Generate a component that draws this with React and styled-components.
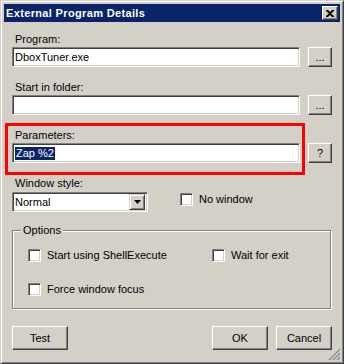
import React from 'react';
import styled, { createGlobalStyle } from 'styled-components';

const Global = createGlobalStyle`
  html, body { margin: 0; padding: 0; background: #d4d0c8; }
  * { box-sizing: border-box; }
`;

const Window = styled.div`
  position: relative;
  width: 344px;
  height: 364px;
  background: #d4d0c8;
  border: 1px solid;
  border-color: #d4d0c8 #404040 #404040 #d4d0c8;
  box-shadow: inset 1px 1px #fff, inset -1px -1px #808080;
  padding: 3px;
  display: flex;
  flex-direction: column;
  font-family: "Liberation Sans", Arial, sans-serif;
  font-size: 11px;
  color: #000;
`;

const TitleBar = styled.div`
  height: 18px;
  background: #0a246a;
  display: flex;
  align-items: center;
  justify-content: space-between;
  padding: 0 2px 0 2px;
`;

const Title = styled.div`
  color: #fff;
  font-weight: bold;
  font-size: 11px;
  letter-spacing: 0.35px;
  line-height: 14px;
`;

const CloseBtn = styled.div`
  width: 16px;
  height: 14px;
  background: #d4d0c8;
  border: 1px solid;
  border-color: #fff #404040 #404040 #fff;
  box-shadow: inset -1px -1px #808080;
  display: flex;
  align-items: center;
  justify-content: center;
`;

const Body = styled.div`
  flex: 1;
  display: flex;
  flex-direction: column;
  padding: 11px 8px 0 8px;
`;

const Label = styled.div`
  height: 13px;
  line-height: 13px;
  padding-left: 3px;
  margin-top: ${p => p.$top || 0}px;
  margin-bottom: ${p => (p.$gap == null ? 1 : p.$gap)}px;
`;

const Row = styled.div`
  display: flex;
  align-items: flex-start;
  gap: ${p => p.$gap || 8}px;
`;

const Field = styled.div`
  width: ${p => p.$w || 288}px;
  height: 20px;
  background: #fff;
  border: 1px solid;
  border-color: #808080 #fff #fff #808080;
  box-shadow: inset 1px 1px #404040, inset -1px -1px #d4d0c8;
  padding: 0 2px;
  line-height: 18px;
  white-space: nowrap;
  display: flex;
  align-items: center;
`;

const Selected = styled.span`
  background: #0a246a;
  color: #fff;
  line-height: 13px;
  padding: 0 1px;
`;

const Button = styled.div`
  width: ${p => p.$w || 24}px;
  height: ${p => p.$h || 20}px;
  background: #d4d0c8;
  border: 1px solid;
  border-color: #fff #404040 #404040 #fff;
  box-shadow: inset -1px -1px #808080;
  display: flex;
  align-items: center;
  justify-content: center;
  margin-top: ${p => p.$top || 0}px;
  line-height: 13px;
`;

const HighlightBox = styled.div`
  margin-left: -7px;
  border: 3px solid #ff0000;
  padding: 3px 2px 9px 4px;
`;

const DropArrow = styled.div`
  margin-left: auto;
  width: 16px;
  height: 16px;
  background: #d4d0c8;
  border: 1px solid;
  border-color: #d4d0c8 #404040 #404040 #d4d0c8;
  box-shadow: inset 1px 1px #fff, inset -1px -1px #808080;
  display: flex;
  align-items: center;
  justify-content: center;
`;

const Check = styled.label`
  display: flex;
  align-items: center;
  gap: 6px;
  height: 13px;
  line-height: 13px;
  margin-top: ${p => p.$top || 0}px;
`;

const Box = styled.span`
  width: 13px;
  height: 13px;
  background: #fff;
  border: 1px solid;
  border-color: #808080 #fff #fff #808080;
  box-shadow: inset 1px 1px #404040, inset -1px -1px #d4d0c8;
  flex: none;
`;

const Group = styled.div`
  position: relative;
  margin-top: 18px;
  width: 319px;
  height: 79px;
  border: 1px solid #808080;
  box-shadow: inset 1px 1px #fff, 1px 1px #fff;
  display: grid;
  grid-template-columns: 184px 1fr;
  row-gap: 21px;
  align-content: start;
  padding: 18px 0 0 15px;
`;

const Legend = styled.span`
  position: absolute;
  top: -7px;
  left: 8px;
  background: #d4d0c8;
  padding: 0 2px;
  line-height: 13px;
`;

const ButtonBar = styled.div`
  display: flex;
  justify-content: space-between;
  margin-top: 17px;
  width: 320px;
`;

const RightButtons = styled.div`
  display: flex;
  gap: 8px;
`;

const Grip = styled.svg`
  position: absolute;
  right: 3px;
  bottom: 3px;
`;

export default function App() {
  return (
    <>
      <Global />
      <Window>
        <TitleBar>
          <Title>External Program Details</Title>
          <CloseBtn>
            <svg width="8" height="7" viewBox="0 0 8 7">
              <path d="M0 0h2l2 2 2-2h2v1L5 3.5 8 6v1H6L4 5 2 7H0V6l3-2.5L0 1z" fill="#000" />
            </svg>
          </CloseBtn>
        </TitleBar>
        <Body>
          <Label>Program:</Label>
          <Row>
            <Field>DboxTuner.exe</Field>
            <Button>...</Button>
          </Row>

          <Label $top={14}>Start in folder:</Label>
          <Row>
            <Field />
            <Button>...</Button>
          </Row>

          <Row $gap={3} style={{ marginTop: 8 }}>
            <HighlightBox>
              <Label>Parameters:</Label>
              <Field><Selected>Zap %2</Selected></Field>
            </HighlightBox>
            <Button $top={20}>?</Button>
          </Row>

          <Label $top={2} $gap={2}>Window style:</Label>
          <Row $gap={32}>
            <Field $w={136}>
              Normal
              <DropArrow>
                <svg width="7" height="4" viewBox="0 0 7 4">
                  <path d="M0 0h7L3.5 4z" fill="#000" />
                </svg>
              </DropArrow>
            </Field>
            <Check $top={1}><Box />No window</Check>
          </Row>

          <Group>
            <Legend>Options</Legend>
            <Check><Box />Start using ShellExecute</Check>
            <Check><Box />Wait for exit</Check>
            <Check><Box />Force window focus</Check>
          </Group>

          <ButtonBar>
            <Button $w={56} $h={24}>Test</Button>
            <RightButtons>
              <Button $w={56} $h={24}>OK</Button>
              <Button $w={56} $h={24}>Cancel</Button>
            </RightButtons>
          </ButtonBar>
        </Body>
        <Grip width="12" height="12" viewBox="0 0 12 12">
          <path d="M11 1L1 11M11 5L5 11M11 9L9 11" stroke="#fff" strokeWidth="1" />
          <path d="M12 1L1 12M12 5L5 12M12 9L9 12" stroke="#808080" strokeWidth="1.4" />
        </Grip>
      </Window>
    </>
  );
}
